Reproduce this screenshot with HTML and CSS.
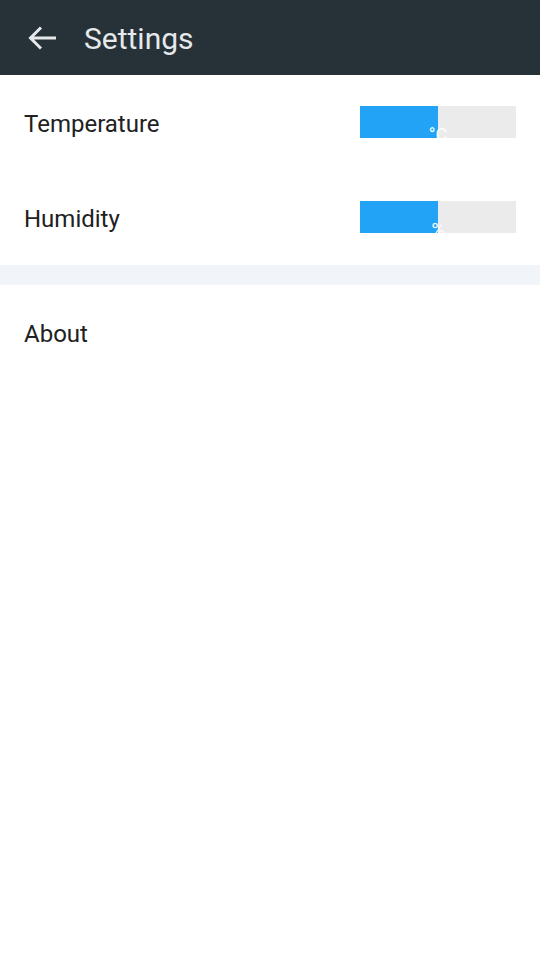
FILE: index.html
```html
<!DOCTYPE html>
<html lang="en">
<head>
    <meta charset="UTF-8">
    <meta name="viewport" content="width=device-width, initial-scale=1.0">
    <title>Settings</title>
    <link rel="stylesheet" href="styles.css">
</head>
<body>
    <header class="toolbar">
        <svg class="back" width="32" height="28" viewBox="0 0 32 28">
            <path d="M29 14H4M14 3.5L3.5 14L14 24.5" fill="none" stroke="#e6e9eb" stroke-width="3"/>
        </svg>
        <h1 class="title">Settings</h1>
    </header>

    <div class="group">
        <div class="row">
            <span class="label">Temperature</span>
            <div class="toggle">
                <div class="on"></div>
                <div class="off"></div>
                <span class="unit">°C</span>
            </div>
        </div>
        <div class="row">
            <span class="label">Humidity</span>
            <div class="toggle">
                <div class="on"></div>
                <div class="off"></div>
                <span class="unit">%</span>
            </div>
        </div>
    </div>

    <div class="divider"></div>

    <div class="group">
        <div class="row">
            <span class="label">About</span>
        </div>
    </div>
</body>
</html>
```

FILE: styles.css
```css
body {
    margin: 0;
    font-family: Roboto, "Noto Sans", sans-serif;
    background-color: #fff;
}
.toolbar {
    height: 75px;
    background-color: #263238;
    display: flex;
    align-items: center;
    padding-left: 27px;
}
.back {
    display: block;
}
.title {
    margin: 2px 0 0 25px;
    font-size: 30px;
    font-weight: 400;
    color: #e6e9eb;
}
.row {
    height: 95px;
    display: flex;
    align-items: center;
    justify-content: space-between;
    padding: 0 24px;
}
.label {
    font-size: 24px;
    color: #212121;
    margin-top: 3px;
}
.toggle {
    position: relative;
    width: 156px;
    height: 32px;
    display: flex;
    overflow: hidden;
    margin-top: -1px;
}
.toggle .on {
    flex: 1;
    background-color: #22a3f5;
}
.toggle .off {
    flex: 1;
    background-color: #ebebeb;
}
.toggle .unit {
    position: absolute;
    left: 50%;
    top: 18px;
    transform: translateX(-50%);
    font-size: 18px;
    color: #fff;
}
.divider {
    height: 20px;
    background-color: #f1f4f8;
}
```
